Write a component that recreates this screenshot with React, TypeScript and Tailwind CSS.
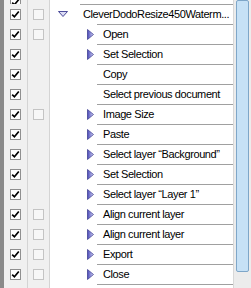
import React from "react";

type Row = { label: string; arrow: boolean; box2: boolean };

const rows: Row[] = [
  { label: "Open", arrow: true, box2: true },
  { label: "Set Selection", arrow: true, box2: false },
  { label: "Copy", arrow: false, box2: false },
  { label: "Select previous document", arrow: false, box2: false },
  { label: "Image Size", arrow: true, box2: true },
  { label: "Paste", arrow: true, box2: false },
  { label: "Select layer \u201cBackground\u201d", arrow: true, box2: false },
  { label: "Set Selection", arrow: true, box2: false },
  { label: "Select layer \u201cLayer 1\u201d", arrow: true, box2: false },
  { label: "Align current layer", arrow: true, box2: true },
  { label: "Align current layer", arrow: true, box2: true },
  { label: "Export", arrow: true, box2: true },
  { label: "Close", arrow: true, box2: true },
];

const Check = () => (
  <div className="w-[11px] h-[11px] border border-[#8f8f8f] bg-white flex items-center justify-center">
    <svg width="9" height="9" viewBox="0 0 9 9">
      <path d="M1.2 4.6 L3.4 6.8 L7.8 1.5" stroke="#000" strokeWidth="1.7" fill="none" />
    </svg>
  </div>
);

const EmptyBox = () => (
  <div className="w-[11px] h-[11px] border border-[#c4c4c4] bg-[#f7f7f7]" />
);

const RightArrow = () => (
  <svg width="7" height="11" viewBox="0 0 7 11">
    <defs>
      <linearGradient id="ra" x1="0" y1="0" x2="1" y2="0">
        <stop offset="0" stopColor="#4848b8" />
        <stop offset="1" stopColor="#d4d4f4" />
      </linearGradient>
    </defs>
    <path d="M0.5 0.5 L6.5 5.5 L0.5 10.5 Z" fill="url(#ra)" stroke="#34348a" strokeWidth="0.7" />
  </svg>
);

const DownArrow = () => (
  <svg width="10" height="6" viewBox="0 0 10 6">
    <path d="M0.5 0.5 L9.5 0.5 L5 5.5 Z" fill="#dcdcf4" stroke="#3a3a90" strokeWidth="0.9" />
  </svg>
);

const Gutter = ({ box2 }: { box2: boolean }) => (
  <div className="flex h-full shrink-0">
    <div className="w-[4px] bg-[#8a8a8a]" />
    <div className="w-[24px] flex items-center justify-center bg-[#f0f0f0] border-r border-[#d4d4d4]">
      <Check />
    </div>
    <div className="w-[22px] flex items-center justify-center bg-[#f0f0f0] border-r border-[#d4d4d4]">
      {box2 && <EmptyBox />}
    </div>
  </div>
);

export default function App() {
  return (
    <div
      className="w-[251px] h-[288px] overflow-hidden flex bg-white text-[11px] tracking-[-0.4px] text-black"
      style={{ fontFamily: "Tahoma, 'Liberation Sans', sans-serif" }}
    >
      <div className="flex-1 min-w-0 flex flex-col overflow-hidden">
        <div className="h-[4px] shrink-0 flex">
          <Gutter box2={false} />
        </div>
        <div className="h-[20px] shrink-0 flex">
          <Gutter box2={true} />
          <div className="w-[18px] shrink-0 flex items-center justify-end">
            <DownArrow />
          </div>
          <div className="w-[12px] shrink-0" />
          <div className="flex-1 min-w-0 flex items-center border-t border-[#a0a0a0] pl-[3px]">
            <span className="whitespace-nowrap">CleverDodoResize450Waterm...</span>
          </div>
        </div>
        {rows.map((r, i) => (
          <div key={i} className="h-[20px] shrink-0 flex">
            <Gutter box2={r.box2} />
            <div className="w-[37px] shrink-0" />
            <div className="w-[10px] shrink-0 flex items-center">{r.arrow && <RightArrow />}</div>
            <div className="flex-1 min-w-0 flex items-center border-t border-[#a0a0a0] pl-[6px]">
              <span className="whitespace-nowrap">{r.label}</span>
            </div>
          </div>
        ))}
        <div className="h-[20px] shrink-0 flex">
          <Gutter box2={true} />
          <div className="w-[47px] shrink-0" />
          <div className="flex-1 border-t border-[#a0a0a0]" />
        </div>
      </div>
      <div className="w-[18px] shrink-0 border-l border-[#d8d8d8] bg-[#ececec] flex flex-col px-[2px]">
        <div className="h-[272px] border border-[#7ea6c8] bg-[#c6e1f6] rounded-[2px]" />
      </div>
    </div>
  );
}
